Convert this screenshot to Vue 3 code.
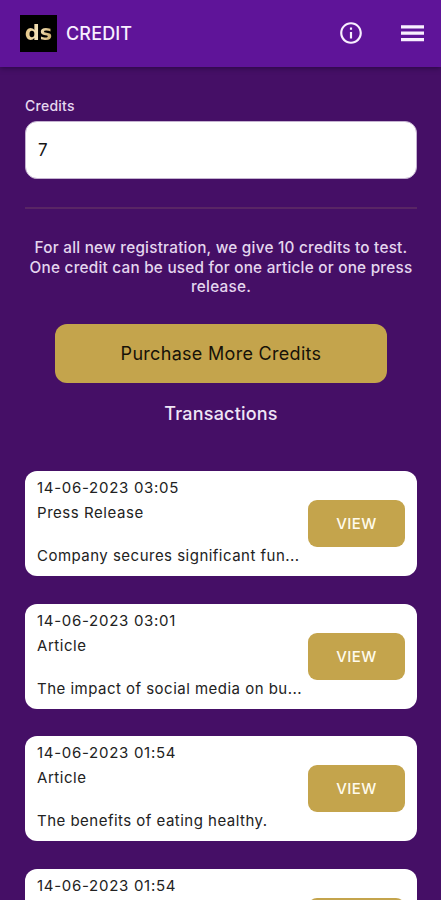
<script setup>
const credits = 7
const transactions = [
  { date: '14-06-2023 03:05', type: 'Press Release', title: 'Company secures significant fun...', action: 'VIEW' },
  { date: '14-06-2023 03:01', type: 'Article', title: 'The impact of social media on bu...', action: 'VIEW' },
  { date: '14-06-2023 01:54', type: 'Article', title: 'The benefits of eating healthy.', action: 'VIEW' },
  { date: '14-06-2023 01:54' },
]
</script>

<template>
  <div class="screen">
    <header class="bar">
      <div class="logo"><span>ds</span></div>
      <h1>CREDIT</h1>
      <svg class="info" viewBox="0 0 24 24">
        <path d="M11 7h2v2h-2zm0 4h2v6h-2zm1-9C6.48 2 2 6.48 2 12s4.48 10 10 10 10-4.48 10-10S17.52 2 12 2zm0 18c-4.41 0-8-3.59-8-8s3.590-8 8-8 8 3.590 8 8-3.590 8-8 8z" />
      </svg>
      <svg class="menu" viewBox="0 0 23 17">
        <path d="M0 .2h23v3.200H0zM0 6.600h23v3.200H0zM0 13h23v3.200H0z" />
      </svg>
    </header>
    <main>
      <label class="label">Credits</label>
      <div class="field">{{ credits }}</div>
      <div class="rule"></div>
      <p class="note">For all new registration, we give 10 credits to test.<br />One credit can be used for one article or one press<br />release.</p>
      <button class="buy">Purchase More Credits</button>
      <h2>Transactions</h2>
      <section class="list">
        <article v-for="(t, i) in transactions" :key="i" class="card">
          <div class="text">
            <div class="date">{{ t.date }}</div>
            <div v-if="t.type" class="type">{{ t.type }}</div>
            <div v-if="t.title" class="title">{{ t.title }}</div>
          </div>
          <button class="view">{{ t.action }}</button>
        </article>
      </section>
    </main>
  </div>
</template>

<style>
body { background: #450f66; }
</style>

<style scoped>
* { box-sizing: border-box; margin: 0; }
.screen {
  height: 900px;
  overflow: hidden;
  background: #450f66;
  font-family: Inter, "Liberation Sans", sans-serif;
  display: flex;
  flex-direction: column;
}
.bar {
  height: 67px;
  flex: none;
  background: #5f1499;
  box-shadow: 0 1px 5px rgba(20, 0, 40, 0.55);
  display: flex;
  align-items: center;
  padding: 0 17px 0 20px;
  color: #f8efff;
}
.logo {
  width: 37px;
  height: 37px;
  flex: none;
  background: #000;
  display: flex;
  align-items: center;
  justify-content: center;
}
.logo span {
  font: bold 21px/24px "DejaVu Sans", sans-serif;
  margin-bottom: 2px;
  background: linear-gradient(100deg, #e3c07c, #f3e3bd 50%, #c9a764);
  background-clip: text;
  color: transparent;
}
h1 { font-size: 18px; line-height: 22px; font-weight: 500; letter-spacing: 0.150px; margin-left: 9px; padding-top: 1px; white-space: nowrap; }
.info { width: 26px; height: 26px; margin-left: auto; margin-bottom: 1px; fill: currentColor; }
.menu { width: 23px; height: 17px; margin-left: 37px; fill: currentColor; }
main { padding: 30px 24px 0 25px; display: flex; flex-direction: column; flex: none; }
.label { font-size: 14px; line-height: 18px; font-weight: 500; letter-spacing: 0.250px; color: #e6d8ef; }
.field {
  margin-top: 6px;
  height: 58px;
  border: 1px solid #c4b2d0;
  border-radius: 12px;
  background: #fff;
  padding: 0 12px;
  font-size: 17px;
  line-height: 56px;
  color: #161616;
}
.rule { height: 2px; margin-top: 28px; background: #592665; }
.note {
  margin-top: 29px;
  text-align: center;
  font-size: 15.300px;
  line-height: 19.500px;
  font-weight: 500;
  letter-spacing: 0.240px;
  color: #e4d6ee;
  white-space: nowrap;
}
button { border: 0; padding: 0; font-family: inherit; }
.buy {
  margin: 27px 30px 0;
  padding-top: 1px;
  height: 59px;
  border-radius: 12px;
  background: #c4a44c;
  color: #171208;
  font-size: 18px;
  letter-spacing: 0.300px;
}
h2 { margin-top: 19px; font-size: 18px; line-height: 24px; font-weight: 500; letter-spacing: 0.200px; text-align: center; color: #efe5f6; }
.list { margin-top: 45.500px; display: flex; flex-direction: column; gap: 27.600px; }
.card {
  height: 105px;
  background: #fff;
  border-radius: 12px;
  padding: 0 12px;
  display: flex;
  justify-content: space-between;
  align-items: center;
}
.text { align-self: flex-start; padding-top: 7px; font-size: 15px; line-height: 20px; color: #222; white-space: nowrap; letter-spacing: 0.480px; }
.date { letter-spacing: 0.710px; }
.type { margin-top: 5px; letter-spacing: 0.550px; }
.title { margin-top: 23px; }
.view {
  width: 97px;
  height: 47px;
  flex: none;
  border-radius: 9px;
  background: #c4a44c;
  color: #fffbed;
  font-size: 15px;
  font-weight: 500;
  letter-spacing: 0.400px;
}
</style>
